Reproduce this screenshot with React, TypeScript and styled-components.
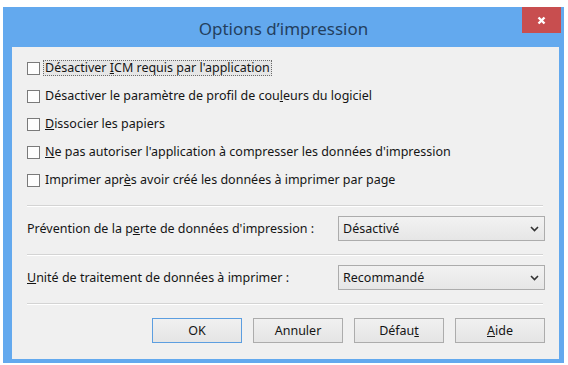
import React from "react";
import styled, { createGlobalStyle } from "styled-components";

const Global = createGlobalStyle`
  html, body { margin: 0; padding: 0; background: #ffffff; }
  body { font-family: "Noto Sans", "Open Sans", sans-serif; }
`;

const Window = styled.div`
  margin: 7px 0 0 3px;
  width: 561px;
  height: 356px;
  background: #63a9ee;
  display: flex;
  flex-direction: column;
  box-sizing: border-box;
`;

const TitleBar = styled.div`
  height: 40px;
  display: grid;
  grid-template-columns: 1fr auto 1fr;
  flex: none;
`;

const Title = styled.div`
  grid-column: 2;
  align-self: center;
  font-family: "Noto Sans", sans-serif;
  font-size: 17px;
  color: #23405e;
  padding-top: 2px;
`;

const CloseButton = styled.div`
  grid-column: 3;
  justify-self: end;
  align-self: start;
  width: 39px;
  height: 26px;
  margin-right: 3px;
  background: #c84e4f;
  display: flex;
  align-items: center;
  justify-content: center;
`;

const Content = styled.div`
  flex: 1;
  margin: 0 5px 4px 9px;
  background: #f0f0f0;
  padding: 7px 14px 0 15px;
  box-sizing: border-box;
  display: flex;
  flex-direction: column;
  font-size: 12.5px;
  color: #151515;
  letter-spacing: 0;
`;

const CheckRow = styled.label`
  height: 28px;
  display: flex;
  align-items: center;
  gap: 3px;
`;

const Box = styled.span`
  width: 13px;
  height: 13px;
  box-sizing: border-box;
  border: 1px solid #7a7a7a;
  background: #fdfdfd;
  flex: none;
`;

const Label = styled.span<{ $focus?: boolean }>`
  padding: 0 1px;
  line-height: 14px;
  border: 1px ${(p) => (p.$focus ? "dotted #6b6b6b" : "solid transparent")};
  background: ${(p) => (p.$focus ? "#e6e6e6" : "transparent")};
`;

const Separator = styled.div<{ $top: number }>`
  margin-top: ${(p) => p.$top}px;
  margin-right: 2px;
  height: 1px;
  background: #d4d4d4;
  border-bottom: 1px solid #ffffff;
  flex: none;
`;

const FieldRow = styled.div`
  margin-top: 9px;
  margin-bottom: 13px;
  height: 25px;
  display: flex;
  align-items: center;
  justify-content: space-between;
`;

const Select = styled.div`
  width: 207px;
  height: 25px;
  box-sizing: border-box;
  border: 1px solid #acacac;
  background: linear-gradient(#f2f2f2, #e6e6e6);
  display: flex;
  align-items: center;
  justify-content: space-between;
  padding: 0 5px 0 4px;
`;

const ButtonRow = styled.div`
  margin-top: 13px;
  display: flex;
  justify-content: flex-end;
  gap: 11px;
`;

const Button = styled.div<{ $default?: boolean }>`
  width: 90px;
  height: 25px;
  box-sizing: border-box;
  border: 1px solid ${(p) => (p.$default ? "#5c9ee0" : "#acacac")};
  background: linear-gradient(#f0f0f0, #e5e5e5);
  display: flex;
  align-items: center;
  justify-content: center;
`;

const U = styled.span`
  text-decoration: underline;
`;

const Chevron = () => (
  <svg width="9" height="6" viewBox="0 0 9 6">
    <path d="M1 1 L4.5 4.5 L8 1" stroke="#333" strokeWidth="1.6" fill="none" />
  </svg>
);

const CloseIcon = () => (
  <svg width="9" height="9" viewBox="0 0 9 9">
    <path d="M1.5 1.5 L7.5 7.5 M7.5 1.5 L1.5 7.5" stroke="#fff" strokeWidth="2.4" />
  </svg>
);

export default function App() {
  return (
    <>
      <Global />
      <Window>
        <TitleBar>
          <Title>Options d’impression</Title>
          <CloseButton>
            <CloseIcon />
          </CloseButton>
        </TitleBar>
        <Content>
          <CheckRow>
            <Box />
            <Label $focus>
              Désactiver <U>I</U>CM requis par l'application
            </Label>
          </CheckRow>
          <CheckRow>
            <Box />
            <Label>
              Désactiver le paramètre de profil de cou<U>l</U>eurs du logiciel
            </Label>
          </CheckRow>
          <CheckRow>
            <Box />
            <Label>
              <U>D</U>issocier les papiers
            </Label>
          </CheckRow>
          <CheckRow>
            <Box />
            <Label>
              <U>N</U>e pas autoriser l'application à compresser les données d'impression
            </Label>
          </CheckRow>
          <CheckRow>
            <Box />
            <Label>
              Imprimer apr<U>è</U>s avoir créé les données à imprimer par page
            </Label>
          </CheckRow>
          <Separator $top={11} />
          <FieldRow>
            <span>
              Prévention de la p<U>e</U>rte de données d'impression :
            </span>
            <Select>
              <span>Désactivé</span>
              <Chevron />
            </Select>
          </FieldRow>
          <Separator $top={0} />
          <FieldRow>
            <span>
              <U>U</U>nité de traitement de données à imprimer :
            </span>
            <Select>
              <span>Recommandé</span>
              <Chevron />
            </Select>
          </FieldRow>
          <Separator $top={0} />
          <ButtonRow>
            <Button $default>OK</Button>
            <Button>Annuler</Button>
            <Button>
              Défau<U>t</U>
            </Button>
            <Button>
              <U>A</U>ide
            </Button>
          </ButtonRow>
        </Content>
      </Window>
    </>
  );
}
